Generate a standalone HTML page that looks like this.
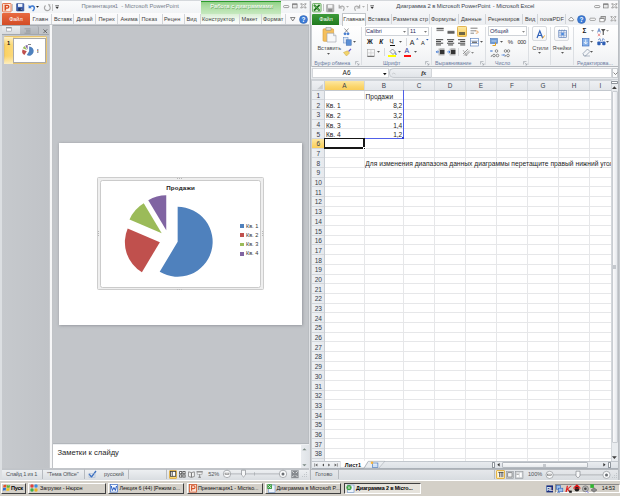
<!DOCTYPE html>
<html><head><meta charset="utf-8">
<style>
*{margin:0;padding:0;box-sizing:border-box}
html,body{width:620px;height:496px;overflow:hidden;background:#d4d0c8;font-family:"Liberation Sans",sans-serif;position:relative}
.a{position:absolute}
.t{position:absolute;white-space:nowrap;line-height:1;}
svg{position:absolute;overflow:visible}
</style></head><body>
<div class="a" style="left:0px;top:0px;width:311px;height:480px;background:#c2c5c9"></div>
<div class="a" style="left:0px;top:0px;width:311px;height:13px;background:linear-gradient(#fafbfc,#f1f3f5)"></div>
<div class="a" style="left:0px;top:13px;width:311px;height:12px;background:linear-gradient(#fbfbfc,#f5f6f7)"></div>
<div class="a" style="left:0px;top:24px;width:311px;height:1px;background:#c9ccd0"></div>
<div class="a" style="left:0px;top:25px;width:311px;height:1px;background:#a9adb2"></div>
<div class="a" style="left:0px;top:0px;width:1.5px;height:480px;background:#dcdfe2"></div>
<svg style="left:2px;top:2.6px" width="10" height="10"><rect x="0.5" y="0.5" width="8.6" height="8.4" rx="0.6" fill="#fde9de" stroke="#e0683c" stroke-width="0.9"/><rect x="1.5" y="1.5" width="3" height="6.4" fill="#f6b89a" opacity=".6"/><path d="M3.3 7.4 L3.3 2.4 L5.3 2.4 Q6.8 2.4 6.8 3.8 Q6.8 5.2 5.3 5.2 L3.3 5.2" fill="none" stroke="#d6461c" stroke-width="1.3"/></svg>
<div class="a" style="left:12px;top:4px;width:0.6px;height:7px;background:#c2c2c2"></div>
<svg style="left:15.5px;top:3.3px" width="9" height="9"><rect x="0.5" y="0.5" width="7.4" height="7.6" rx="0.6" fill="#3d5fae" stroke="#2b4788" stroke-width="0.5"/><rect x="2" y="0.8" width="4.4" height="3.1" fill="#eef2fa"/><rect x="2.3" y="5.1" width="3.8" height="2.8" fill="#22345e"/><rect x="4.8" y="5.5" width="0.9" height="1.6" fill="#8aa0d0"/></svg>
<svg style="left:26.5px;top:3px" width="9" height="9"><path d="M1.6 1.8 L1.6 5.2 L4.8 5.2z" fill="#3a78d0"/><path d="M2.4 4.6 C3.8 2.2 7.6 2.4 7.3 5.3 C7.1 6.6 6.4 7.4 5.6 8" fill="none" stroke="#3a78d0" stroke-width="1.4"/></svg>
<svg style="left:35.6px;top:5.8px" width="4" height="3"><path d="M0 0 L3 0 L1.5 1.8z" fill="#222"/></svg>
<svg style="left:42.5px;top:3px" width="9" height="9"><path d="M6.3 2.6 A2.9 2.9 0 1 1 2.6 2.4" fill="none" stroke="#a8a8a8" stroke-width="1.2"/><path d="M5 0.8 L7.6 1.8 L6.2 4z" fill="#a8a8a8"/></svg>
<div class="a" style="left:52px;top:4px;width:0.6px;height:7px;background:#c2c2c2"></div>
<svg style="left:54.5px;top:5px" width="5" height="5"><path d="M0.3 0.6 L4 0.6" stroke="#333" stroke-width="0.6"/><path d="M0.4 1.8 L3.9 1.8 L2.15 3.9z" fill="#333"/></svg>
<div class="t" style="left:81.5px;top:4.0px;font-size:5.8px;color:#76808c;letter-spacing:-0.15px">Презентация1</div>
<div class="t" style="left:121.2px;top:4.0px;font-size:5.8px;color:#76808c;letter-spacing:-0.03px">- Microsoft PowerPoint</div>
<div class="a" style="left:201px;top:0px;width:80px;height:13.5px;background:linear-gradient(#2c9c2d 0,#2c9c2d 1.5px,#8fd085 1.9px,#a9dc9f 6px,#c4e8bd 13.5px)"></div>
<div class="a" style="left:201px;top:13.5px;width:80px;height:10.5px;background:linear-gradient(#d9efd4,#f3faf2 60%,#fdfefd)"></div>
<div class="t" style="left:210.3px;top:3.9px;font-size:5.8px;color:#fff;letter-spacing:0.02px;text-shadow:0.5px 0.5px 0 rgba(50,120,50,.6)">Работа с диаграммами</div>
<svg style="left:283.3px;top:2px" width="26" height="8"><rect x="0.6" y="3.6" width="5.2" height="2" rx="0.8" fill="#fff" stroke="#7d7d7d" stroke-width="0.75"/><rect x="9.5" y="2" width="4.6" height="3.9" fill="#fff" stroke="#7d7d7d" stroke-width="0.75"/><path d="M9.5 2.2 L14.1 2.2" stroke="#7d7d7d" stroke-width="1.2"/><path d="M9.5 4 L14.1 4" stroke="#9a9a9a" stroke-width="0.5"/><path d="M17.6 1.8 L19.3 1.8 L20.4 3 L21.5 1.8 L23.2 1.8 L21.5 3.85 L23.2 5.9 L21.5 5.9 L20.4 4.7 L19.3 5.9 L17.6 5.9 L19.3 3.85z" fill="#fff" stroke="#7d7d7d" stroke-width="0.7"/></svg>
<div class="a" style="left:2px;top:13px;width:28px;height:11.5px;background:linear-gradient(#e86a40,#d24b25);border-radius:1px 1px 0 0"></div>
<div class="t" style="left:9.2px;top:16.8px;font-size:5.6px;color:#fff;letter-spacing:-0.1px">Файл</div>
<div class="t" style="left:32.5px;top:17.1px;font-size:5.6px;color:#3a3a3a;letter-spacing:0.08px">Главн</div>
<div class="a" style="left:51px;top:14px;width:0.6px;height:10px;background:#d2d5d9"></div>
<div class="t" style="left:54px;top:17.1px;font-size:5.6px;color:#3a3a3a;letter-spacing:0.08px">Вставк</div>
<div class="a" style="left:73px;top:14px;width:0.6px;height:10px;background:#d2d5d9"></div>
<div class="t" style="left:76.5px;top:17.1px;font-size:5.6px;color:#3a3a3a;letter-spacing:0.08px">Дизай</div>
<div class="a" style="left:95px;top:14px;width:0.6px;height:10px;background:#d2d5d9"></div>
<div class="t" style="left:98.5px;top:17.1px;font-size:5.6px;color:#3a3a3a;letter-spacing:0.08px">Перех</div>
<div class="a" style="left:117px;top:14px;width:0.6px;height:10px;background:#d2d5d9"></div>
<div class="t" style="left:120.5px;top:17.1px;font-size:5.6px;color:#3a3a3a;letter-spacing:0.08px">Анима</div>
<div class="a" style="left:139px;top:14px;width:0.6px;height:10px;background:#d2d5d9"></div>
<div class="t" style="left:141.5px;top:17.1px;font-size:5.6px;color:#3a3a3a;letter-spacing:0.08px">Показ</div>
<div class="a" style="left:162px;top:14px;width:0.6px;height:10px;background:#d2d5d9"></div>
<div class="t" style="left:164px;top:17.1px;font-size:5.6px;color:#3a3a3a;letter-spacing:0.08px">Рецен</div>
<div class="a" style="left:184px;top:14px;width:0.6px;height:10px;background:#d2d5d9"></div>
<div class="t" style="left:186.5px;top:17.1px;font-size:5.6px;color:#3a3a3a;letter-spacing:0.08px">Вид</div>
<div class="a" style="left:200px;top:14px;width:0.6px;height:10px;background:#d2d5d9"></div>
<div class="t" style="left:202px;top:17.1px;font-size:5.6px;color:#3a3a3a;letter-spacing:0.08px">Конструктор</div>
<div class="a" style="left:239px;top:14px;width:0.6px;height:10px;background:#d2d5d9"></div>
<div class="t" style="left:241.5px;top:17.1px;font-size:5.6px;color:#3a3a3a;letter-spacing:0.08px">Макет</div>
<div class="a" style="left:260.5px;top:14px;width:0.6px;height:10px;background:#d2d5d9"></div>
<div class="t" style="left:263px;top:17.1px;font-size:5.6px;color:#3a3a3a;letter-spacing:0.08px">Формат</div>
<div class="a" style="left:285px;top:14px;width:0.6px;height:10px;background:#d2d5d9"></div>
<svg style="left:289.5px;top:16.5px" width="6" height="5"><path d="M0.5 0.5 L5 0.5 L2.75 4z" fill="none" stroke="#555" stroke-width="0.7"/></svg>
<svg style="left:298.5px;top:14.5px" width="10" height="10"><circle cx="4.5" cy="4.5" r="4" fill="#3c7bd6" stroke="#2c5fa8" stroke-width="0.5"/><text x="4.5" y="6.9" font-size="6.5" font-weight="bold" fill="#fff" text-anchor="middle" font-family="Liberation Sans">?</text></svg>
<div class="a" style="left:2px;top:25px;width:47.5px;height:443px;background:linear-gradient(90deg,#c6c9cd,#c0c3c7)"></div>
<div class="a" style="left:0px;top:25px;width:50px;height:1px;background:#a9adb2"></div>
<div class="a" style="left:2px;top:25.5px;width:18px;height:9px;background:linear-gradient(#eceef0,#d5d8dc)"></div>
<div class="a" style="left:20px;top:25.8px;width:19px;height:8.7px;background:linear-gradient(#c2c6cb,#b2b6bb);border-radius:0 2px 0 0;border-right:0.5px solid #a5a9ae"></div>
<div class="a" style="left:2px;top:34.4px;width:47.5px;height:0.8px;background:#a4a8ad"></div>
<svg style="left:5.5px;top:27px" width="7" height="5"><rect x="0.5" y="0.5" width="5" height="3.6" fill="#fff" stroke="#8a8e93" stroke-width="0.5"/><path d="M0.6 0.9 L5.4 0.9" stroke="#5a5e63" stroke-width="0.7"/></svg>
<svg style="left:24px;top:27.5px" width="8" height="6"><path d="M0.5 0.8 L6.5 0.8 M2 2.3 L6.5 2.3 M2 3.8 L6.5 3.8 M0.5 5.2 L6.5 5.2" stroke="#8e9297" stroke-width="0.7"/></svg>
<svg style="left:42.6px;top:28.6px" width="5" height="5"><path d="M0.4 0.4 L4.1 4.1 M4.1 0.4 L0.4 4.1" stroke="#3a3a3a" stroke-width="0.65"/></svg>
<div class="a" style="left:3.7px;top:36px;width:43.3px;height:28.2px;background:linear-gradient(90deg,#fbd261 0,#fcd97a 20%,#fdeab0 45%,#fdf3d2 100%);border:0.6px solid #e8c46f;border-radius:1.2px"></div>
<div class="a" style="left:4.3px;top:36.6px;width:9px;height:27px;background:linear-gradient(#fdf0c4,rgba(252,214,110,0) 30%,rgba(252,214,110,0) 70%,#fdeebf)"></div>
<div class="t" style="left:7.1px;top:40.7px;font-size:5.6px;color:#111;font-weight:bold">1</div>
<div class="a" style="left:13.4px;top:38.2px;width:32.2px;height:24.6px;background:#fff;border:0.5px solid #a9a9a9"></div>
<div class="a" style="left:48.6px;top:25px;width:4.6px;height:443px;background:linear-gradient(90deg,#a2a6ab,#e6e7e9 22%,#ffffff 45%,#f2f3f4 70%,#9da1a6)"></div>
<div class="a" style="left:53px;top:26px;width:255.5px;height:417px;background:#c2c5c9"></div>
<div class="a" style="left:308px;top:26px;width:1px;height:417px;background:#b9bdc1"></div>
<div class="a" style="left:58.7px;top:142.7px;width:243px;height:182px;background:#fff;box-shadow:0.3px 0.3px 3px 0.6px rgba(70,75,82,.45)"></div>
<div class="a" style="left:96.8px;top:177.1px;width:167.1px;height:113.4px;background:#efefef;border:0.7px solid #cdcdcd;border-radius:1.5px"></div>
<div class="a" style="left:99.6px;top:179.9px;width:161.5px;height:107.9px;background:#fff;border:0.7px solid #cbcbcb;border-radius:2.5px"></div>
<div class="a" style="left:176.5px;top:177.8px;width:6px;height:1px;background:repeating-linear-gradient(90deg,#b9b9b9 0 1px,transparent 1px 2px)"></div>
<div class="a" style="left:176.5px;top:288.8px;width:6px;height:1px;background:repeating-linear-gradient(90deg,#b9b9b9 0 1px,transparent 1px 2px)"></div>
<div class="a" style="left:97.5px;top:231px;width:1px;height:6px;background:repeating-linear-gradient(#b9b9b9 0 1px,transparent 1px 2px)"></div>
<div class="a" style="left:261.8px;top:231px;width:1px;height:6px;background:repeating-linear-gradient(#b9b9b9 0 1px,transparent 1px 2px)"></div>
<svg style="left:0;top:0" width="620" height="496"><path d="M177.66 241.77 L177.66 206.77 A35.0 35.0 0 1 1 159.71 271.82Z" fill="#4f81bd"/><path d="M159.86 242.17 L141.90 272.22 A35.0 35.0 0 0 1 127.67 228.42Z" fill="#c0504d"/><path d="M161.70 233.18 L129.51 219.43 A35.0 35.0 0 0 1 143.74 203.14Z" fill="#9bbb59"/><path d="M166.23 230.34 L148.27 200.29 A35.0 35.0 0 0 1 166.23 195.34Z" fill="#8064a2"/></svg>
<div class="t" style="left:166.2px;top:184.5px;font-size:6.2px;color:#1a1a1a;font-weight:bold;letter-spacing:0.2px">Продажи</div>
<div class="a" style="left:240.1px;top:224.1px;width:3.6px;height:3.6px;background:#4f81bd"></div>
<div class="t" style="left:245.9px;top:223.5px;font-size:5.6px;color:#333;">Кв. 1</div>
<div class="a" style="left:240.1px;top:233.4px;width:3.6px;height:3.6px;background:#c0504d"></div>
<div class="t" style="left:245.9px;top:232.8px;font-size:5.6px;color:#333;">Кв. 2</div>
<div class="a" style="left:240.1px;top:242.7px;width:3.6px;height:3.6px;background:#9bbb59"></div>
<div class="t" style="left:245.9px;top:242.1px;font-size:5.6px;color:#333;">Кв. 3</div>
<div class="a" style="left:240.1px;top:252.0px;width:3.6px;height:3.6px;background:#8064a2"></div>
<div class="t" style="left:245.9px;top:251.4px;font-size:5.6px;color:#333;">Кв. 4</div>
<svg style="left:0;top:0" width="620" height="496"><path d="M29.13 51.14 L29.13 46.57 A4.5695473251028815 4.5695473251028815 0 1 1 26.78 55.06Z" fill="#4f81bd"/><path d="M26.78 51.19 L24.44 55.12 A4.5695473251028815 4.5695473251028815 0 0 1 22.58 49.40Z" fill="#c0504d"/><path d="M27.02 50.01 L22.82 48.21 A4.5695473251028815 4.5695473251028815 0 0 1 24.68 46.09Z" fill="#9bbb59"/><path d="M27.62 49.64 L25.28 45.71 A4.5695473251028815 4.5695473251028815 0 0 1 27.62 45.07Z" fill="#8064a2"/></svg>
<div class="a" style="left:27.59053497942387px;top:43.928395061728395px;width:3.2px;height:0.6px;background:#888"></div>
<div class="a" style="left:37.37489711934157px;top:48.830041152263384px;width:0.6px;height:0.6px;background:#4f81bd;opacity:.75"></div>
<div class="a" style="left:38.125514403292186px;top:48.830041152263384px;width:1.2px;height:0.6px;background:#d0d0d0"></div>
<div class="a" style="left:37.37489711934157px;top:50.03497942386832px;width:0.6px;height:0.6px;background:#c0504d;opacity:.75"></div>
<div class="a" style="left:38.125514403292186px;top:50.03497942386832px;width:1.2px;height:0.6px;background:#d0d0d0"></div>
<div class="a" style="left:37.37489711934157px;top:51.23991769547326px;width:0.6px;height:0.6px;background:#9bbb59;opacity:.75"></div>
<div class="a" style="left:38.125514403292186px;top:51.23991769547326px;width:1.2px;height:0.6px;background:#d0d0d0"></div>
<div class="a" style="left:37.37489711934157px;top:52.4448559670782px;width:0.6px;height:0.6px;background:#8064a2;opacity:.75"></div>
<div class="a" style="left:38.125514403292186px;top:52.4448559670782px;width:1.2px;height:0.6px;background:#d0d0d0"></div>
<div class="a" style="left:53px;top:443px;width:256px;height:1px;background:#b2b6bb"></div>
<div class="a" style="left:53px;top:444px;width:256px;height:1px;background:#eef0f2"></div>
<div class="a" style="left:53px;top:445px;width:255.5px;height:23px;background:#fff"></div>
<div class="t" style="left:57.4px;top:448.7px;font-size:7.6px;color:#1e1e1e;">Заметки к слайду</div>
<div class="a" style="left:301px;top:444.5px;width:7.5px;height:23.5px;background:linear-gradient(90deg,#e9ecef,#dfe3e7)"></div>
<svg style="left:302.2px;top:447.8px" width="5" height="3"><path d="M0.3 2.3 L2.4 0.3 L4.5 2.3z" fill="#7d8a85"/></svg>
<svg style="left:302.2px;top:463.6px" width="5" height="3"><path d="M0.3 0.3 L2.4 2.3 L4.5 0.3z" fill="#7d8a85"/></svg>
<div class="a" style="left:2px;top:468.8px;width:309px;height:11.2px;background:linear-gradient(#eff1f3,#e4e7ea 50%,#d9dde1)"></div>
<div class="a" style="left:2px;top:468.6px;width:309px;height:0.8px;background:#c0c4c9"></div>
<div class="t" style="left:6.0px;top:471.6px;font-size:5.6px;color:#4e5358;letter-spacing:-0.18px">Слайд 1 из 1</div>
<div class="a" style="left:42.3px;top:469px;width:0.6px;height:10px;background:#b7bbc0"></div>
<div class="t" style="left:46.9px;top:471.6px;font-size:5.6px;color:#4e5358;letter-spacing:-0.12px">"Тема Office"</div>
<div class="a" style="left:83.7px;top:469px;width:0.6px;height:10px;background:#b7bbc0"></div>
<svg style="left:87.5px;top:469.5px" width="10" height="9"><path d="M1 4 L3.5 7 L8 1" fill="none" stroke="#3a6fc0" stroke-width="1.3"/><rect x="1" y="3.5" width="6" height="4" fill="none" stroke="#9bb2d4" stroke-width="0.5"/></svg>
<div class="t" style="left:104px;top:471.6px;font-size:5.6px;color:#4e5358;letter-spacing:-0.05px">русский</div>
<div class="a" style="left:128px;top:469px;width:0.6px;height:10px;background:#b7bbc0"></div>
<div class="a" style="left:166px;top:469px;width:0.6px;height:10px;background:#b7bbc0"></div>
<div class="a" style="left:168.8px;top:469.8px;width:8.2px;height:9px;background:linear-gradient(#fdeaa8,#fbd466);border:0.8px solid #e0b350;border-radius:1px"></div>
<svg style="left:170px;top:471.2px" width="7" height="6"><rect x="0.5" y="0.5" width="5.2" height="4.8" fill="#fff" stroke="#3a3a3a" stroke-width="0.8"/><path d="M2.3 0.5 L2.3 5.3" stroke="#3a3a3a" stroke-width="0.8"/><path d="M0.9 1.8 L1.9 1.8 M0.9 3.2 L1.9 3.2" stroke="#888" stroke-width="0.5"/></svg>
<svg style="left:178.5px;top:471.2px" width="7" height="7"><rect x="0.6" y="0.6" width="2.2" height="2.2" fill="#fff" stroke="#444" stroke-width="0.8"/><rect x="3.9" y="0.6" width="2.2" height="2.2" fill="#fff" stroke="#444" stroke-width="0.8"/><rect x="0.6" y="3.9" width="2.2" height="2.2" fill="#fff" stroke="#444" stroke-width="0.8"/><rect x="3.9" y="3.9" width="2.2" height="2.2" fill="#fff" stroke="#444" stroke-width="0.8"/></svg>
<svg style="left:187.5px;top:471px" width="8" height="7"><path d="M0.6 0.8 L3.3 1.6 L3.3 6.3 L0.6 5.5z M6.3 0.8 L3.6 1.6 L3.6 6.3 L6.3 5.5z" fill="#fff" stroke="#666" stroke-width="0.7"/></svg>
<svg style="left:196.3px;top:471px" width="8" height="7"><path d="M0.5 0.8 L6.8 0.8" stroke="#666" stroke-width="0.9"/><path d="M1.2 1.3 L6.1 1.3 L6.1 3.3 L1.2 3.3z" fill="#fff" stroke="#777" stroke-width="0.5"/><path d="M3.65 3.3 L3.65 6.3 M2.3 6.3 L5 6.3" stroke="#666" stroke-width="0.7"/></svg>
<div class="t" style="left:208.3px;top:471.6px;font-size:5.6px;color:#4e5358;letter-spacing:-0.1px">52%</div>
<svg style="left:222px;top:469.2px" width="66" height="10"><path d="M8 4.9 L58 4.9" stroke="#9ea2a6" stroke-width="0.7"/><path d="M32.5 3.2 L32.5 6.6" stroke="#9ea2a6" stroke-width="0.6"/><circle cx="5" cy="4.9" r="3.7" fill="#fafbfc" stroke="#8e9297" stroke-width="0.7"/><rect x="3" y="4.1" width="4" height="1.6" fill="#fff" stroke="#555" stroke-width="0.5"/><path d="M19.5 1.2 L23.5 1.2 L23.5 6 L21.5 7.9 L19.5 6z" fill="#f7f8f9" stroke="#7a7e83" stroke-width="0.6"/><circle cx="61" cy="4.9" r="3.7" fill="#fafbfc" stroke="#8e9297" stroke-width="0.7"/><circle cx="61" cy="4.9" r="1.5" fill="#6a6e73"/></svg>
<svg style="left:290.6px;top:469.6px" width="8" height="9"><rect x="0.4" y="0.4" width="7" height="7.6" fill="#85898e" stroke="#9a9ea3" stroke-width="0.5"/><path d="M1.3 1.4 L3 3.1 M6.5 1.4 L4.8 3.1 M1.3 7 L3 5.3 M6.5 7 L4.8 5.3" stroke="#fff" stroke-width="0.8"/></svg>
<svg style="left:302px;top:472px" width="6" height="6"><g fill="#c2c6ca"><rect x="4" y="0" width="1" height="1"/><rect x="2" y="2" width="1" height="1"/><rect x="4" y="2" width="1" height="1"/><rect x="0" y="4" width="1" height="1"/><rect x="2" y="4" width="1" height="1"/><rect x="4" y="4" width="1" height="1"/></g></svg>
<div class="a" style="left:309px;top:0px;width:1px;height:480px;background:#dfe1e4"></div>
<div class="a" style="left:310px;top:0px;width:1px;height:480px;background:#b3b7bc"></div>
<div class="a" style="left:311px;top:0px;width:309px;height:480px;background:#fff"></div>
<div class="a" style="left:311px;top:0px;width:309px;height:13px;background:linear-gradient(#fbfbfc,#f3f4f6)"></div>
<div class="a" style="left:311px;top:13px;width:309px;height:12px;background:linear-gradient(#f4f5f7,#eceef1)"></div>
<div class="a" style="left:311px;top:24.5px;width:309px;height:0.8px;background:#c5c9cd"></div>
<div class="a" style="left:311px;top:25px;width:309px;height:41px;background:linear-gradient(#ffffff,#f7f8f9 60%,#eef0f2)"></div>
<div class="a" style="left:311px;top:65.6px;width:309px;height:1px;background:#b3b7bc"></div>
<div class="a" style="left:311px;top:0px;width:1px;height:25px;background:#e9ebee"></div>
<div class="a" style="left:311px;top:25px;width:1px;height:455px;background:#c9cdd1"></div>
<div class="a" style="left:0px;top:0px;width:620px;height:1px;background:#d5d8dc"></div>
<svg style="left:312px;top:2.6px" width="10" height="10"><rect x="0.5" y="0.5" width="8.6" height="8.4" rx="0.8" fill="#d4ecce" stroke="#5aa552" stroke-width="0.8"/><path d="M2 1.8 L7.6 7.6 M7.6 1.8 L2 7.6" stroke="#1c6e1f" stroke-width="1.7"/><path d="M2.5 2.3 L7.1 7.1" stroke="#72d35e" stroke-width="0.7"/></svg>
<div class="a" style="left:323px;top:4px;width:0.6px;height:7px;background:#c2c2c2"></div>
<svg style="left:326px;top:3.5px" width="9" height="9"><rect x="0.5" y="0.5" width="7.4" height="7.4" rx="0.6" fill="#b4b4b4" stroke="#9a9a9a" stroke-width="0.5"/><rect x="2" y="0.8" width="4.4" height="3" fill="#f3f3f3"/><rect x="2.3" y="5" width="3.8" height="2.6" fill="#8c8c8c"/></svg>
<svg style="left:336.5px;top:3px" width="9" height="9"><path d="M2.2 1.8 L2.2 5 L5.2 5 M2.5 4.7 C4 2.3 7.4 2.8 7.2 5.4 L6.3 7.8" fill="none" stroke="#ababab" stroke-width="1.2"/></svg>
<svg style="left:346px;top:5.8px" width="4" height="3"><path d="M0 0 L3 0 L1.5 1.8z" fill="#b0b0b0"/></svg>
<svg style="left:352.5px;top:3px" width="9" height="9"><path d="M6.6 1.8 L6.6 5 L3.6 5 M6.3 4.7 C4.8 2.3 1.4 2.8 1.6 5.4 L2.5 7.8" fill="none" stroke="#ababab" stroke-width="1.2"/></svg>
<svg style="left:362px;top:5.8px" width="4" height="3"><path d="M0 0 L3 0 L1.5 1.8z" fill="#b0b0b0"/></svg>
<div class="a" style="left:367px;top:4px;width:0.6px;height:7px;background:#c2c2c2"></div>
<svg style="left:369.5px;top:5px" width="5" height="5"><path d="M0.3 0.6 L4 0.6" stroke="#333" stroke-width="0.6"/><path d="M0.4 1.8 L3.9 1.8 L2.15 3.9z" fill="#333"/></svg>
<div class="t" style="left:396.3px;top:4.0px;font-size:5.8px;color:#3c4550;letter-spacing:-0.06px">Диаграмма 2 в Microsoft PowerPoint</div>
<div class="t" style="left:492.8px;top:4.0px;font-size:5.8px;color:#3c4550;letter-spacing:-0.08px">- Microsoft Excel</div>
<svg style="left:593.6px;top:2px" width="26" height="8"><rect x="0.6" y="3.6" width="5.2" height="2" rx="0.8" fill="#fff" stroke="#7d7d7d" stroke-width="0.75"/><rect x="9.5" y="2" width="4.6" height="3.9" fill="#fff" stroke="#7d7d7d" stroke-width="0.75"/><path d="M9.5 2.2 L14.1 2.2" stroke="#7d7d7d" stroke-width="1.2"/><path d="M9.5 4 L14.1 4" stroke="#9a9a9a" stroke-width="0.5"/><path d="M17.6 1.8 L19.3 1.8 L20.4 3 L21.5 1.8 L23.2 1.8 L21.5 3.85 L23.2 5.9 L21.5 5.9 L20.4 4.7 L19.3 5.9 L17.6 5.9 L19.3 3.85z" fill="#fff" stroke="#7d7d7d" stroke-width="0.7"/></svg>
<div class="a" style="left:312px;top:13.5px;width:27px;height:11px;background:linear-gradient(#3d9b3a,#217a1e);border-radius:1px 1px 0 0"></div>
<div class="t" style="left:319.3px;top:16.8px;font-size:5.6px;color:#fff;letter-spacing:-0.1px">Файл</div>
<div class="a" style="left:341.5px;top:13.2px;width:24px;height:12.5px;background:linear-gradient(#fff,#fbfcfc);border:0.7px solid #c2c6ca;border-bottom:none;border-radius:1px 1px 0 0"></div>
<div class="t" style="left:343.2px;top:17.1px;font-size:5.6px;color:#3a3a3a;">Главная</div>
<div class="t" style="left:368px;top:17.1px;font-size:5.6px;color:#3a3a3a;letter-spacing:0.08px">Вставка</div>
<div class="a" style="left:390.5px;top:14px;width:0.6px;height:10px;background:#d2d5d9"></div>
<div class="t" style="left:393px;top:17.1px;font-size:5.6px;color:#3a3a3a;letter-spacing:0.08px">Разметка стр</div>
<div class="a" style="left:428.5px;top:14px;width:0.6px;height:10px;background:#d2d5d9"></div>
<div class="t" style="left:431px;top:17.1px;font-size:5.6px;color:#3a3a3a;letter-spacing:0.08px">Формулы</div>
<div class="a" style="left:458px;top:14px;width:0.6px;height:10px;background:#d2d5d9"></div>
<div class="t" style="left:461px;top:17.1px;font-size:5.6px;color:#3a3a3a;letter-spacing:0.08px">Данные</div>
<div class="a" style="left:485px;top:14px;width:0.6px;height:10px;background:#d2d5d9"></div>
<div class="t" style="left:488px;top:17.1px;font-size:5.6px;color:#3a3a3a;letter-spacing:0.08px">Рецензиров</div>
<div class="a" style="left:521.5px;top:14px;width:0.6px;height:10px;background:#d2d5d9"></div>
<div class="t" style="left:525px;top:17.1px;font-size:5.6px;color:#3a3a3a;letter-spacing:0.08px">Вид</div>
<div class="a" style="left:537px;top:14px;width:0.6px;height:10px;background:#d2d5d9"></div>
<div class="t" style="left:540px;top:17.1px;font-size:5.6px;color:#3a3a3a;letter-spacing:0.08px">novaPDF</div>
<div class="a" style="left:565px;top:14px;width:0.6px;height:10px;background:#d2d5d9"></div>
<svg style="left:567.5px;top:16px" width="7" height="6"><path d="M0.8 3.6 L3.2 1 L5.6 3.6 L5 4.8 L1.4 4.8z" fill="#fff" stroke="#666" stroke-width="0.7"/></svg>
<svg style="left:576.5px;top:14.5px" width="10" height="10"><circle cx="4.5" cy="4.5" r="4" fill="#3c7bd6" stroke="#2c5fa8" stroke-width="0.5"/><text x="4.5" y="6.9" font-size="6.5" font-weight="bold" fill="#fff" text-anchor="middle" font-family="Liberation Sans">?</text></svg>
<svg style="left:588.5px;top:15px" width="30" height="8"><rect x="0.8" y="3.2" width="5.6" height="2.2" rx="0.8" fill="#fff" stroke="#858585" stroke-width="0.75"/><rect x="12" y="1.6" width="4.4" height="3.6" fill="#fff" stroke="#858585" stroke-width="0.75"/><path d="M12 1.8 L16.4 1.8" stroke="#858585" stroke-width="1"/><rect x="10.8" y="3.2" width="4.4" height="3.6" fill="#fff" stroke="#858585" stroke-width="0.75"/><path d="M10.8 3.4 L15.2 3.4" stroke="#858585" stroke-width="1"/><path d="M21.8 1.6 L23.4 1.6 L24.4 2.7 L25.4 1.6 L27 1.6 L25.4 3.75 L27 5.9 L25.4 5.9 L24.4 4.8 L23.4 5.9 L21.8 5.9 L23.4 3.75z" fill="#fff" stroke="#858585" stroke-width="0.7"/></svg>
<svg style="left:322px;top:26.5px" width="16" height="16"><rect x="1" y="1.8" width="10.6" height="12.5" rx="1" fill="#f5c05d" stroke="#d49b34" stroke-width="0.6"/><rect x="4" y="0.6" width="5" height="2.6" fill="#dedede" stroke="#8a8a8a" stroke-width="0.5"/><path d="M5 6.2 L11.5 6.2 L14 8.7 L14 15 L5 15z" fill="#f7f8fa" stroke="#9aa0a8" stroke-width="0.6"/><path d="M11.5 6.2 L11.5 8.7 L14 8.7" fill="#dfe3e8" stroke="#9aa0a8" stroke-width="0.5"/></svg>
<div class="t" style="left:317.4px;top:45.6px;font-size:5.6px;color:#4a4a4a;">Вставить</div>
<svg style="left:327.3px;top:52.800000000000004px" width="4" height="3"><path d="M0 0 L3 0 L1.5 1.8z" fill="#555"/></svg>
<svg style="left:343px;top:27.5px" width="8" height="8"><path d="M1.5 0.5 L5 4.5 M5.5 0.5 L2 4.5" stroke="#555" stroke-width="0.6"/><circle cx="2" cy="5.8" r="1.4" fill="#4a7fd0"/><circle cx="5" cy="5.8" r="1.4" fill="#4a7fd0"/></svg>
<svg style="left:342.5px;top:36.5px" width="10" height="9"><rect x="0.5" y="0.5" width="4.5" height="5.5" fill="#dfe8f5" stroke="#5a85c5" stroke-width="0.5"/><rect x="3.2" y="2.8" width="5" height="5.5" fill="#5b8fd5" stroke="#3a65a5" stroke-width="0.5"/></svg>
<svg style="left:352.8px;top:40.800000000000004px" width="4" height="3"><path d="M0 0 L3 0 L1.5 1.8z" fill="#555"/></svg>
<svg style="left:342.5px;top:48px" width="9" height="9"><path d="M5.5 3.5 L8 0.8" stroke="#6a5acd" stroke-width="1.2"/><path d="M0.5 4.5 L4.5 2.8 L6.5 5 L3.5 8z" fill="#f2d36b" stroke="#c9a640" stroke-width="0.5"/></svg>
<div class="t" style="left:314.2px;top:60.6px;font-size:5.3px;color:#6a7aa0;">Буфер обмена</div>
<svg style="left:355.3px;top:60.5px" width="5" height="5"><path d="M0.5 0.5 L3.5 0.5 M0.5 0.5 L0.5 3.5 M1.5 1.5 L4 4 M2.3 4 L4 4 L4 2.3" fill="none" stroke="#8a9098" stroke-width="0.5"/></svg>
<div class="a" style="left:361px;top:27px;width:1px;height:38px;background:#dcdfe3"></div>
<div class="a" style="left:364.6px;top:26.9px;width:43.6px;height:9.3px;background:#fff;border:0.6px solid #cfd3d8"></div>
<div class="a" style="left:408.2px;top:26.9px;width:21.3px;height:9.3px;background:#fff;border:0.6px solid #cfd3d8"></div>
<div class="t" style="left:366px;top:29.4px;font-size:5.6px;color:#2a2a5a;">Calibri</div>
<div class="t" style="left:410px;top:29.4px;font-size:5.6px;color:#2a2a5a;">11</div>
<svg style="left:402.7px;top:30.5px" width="4" height="3"><path d="M0 0 L3 0 L1.5 1.8z" fill="#777"/></svg>
<svg style="left:423.7px;top:30.5px" width="4" height="3"><path d="M0 0 L3 0 L1.5 1.8z" fill="#777"/></svg>
<div class="t" style="left:367px;top:39.4px;font-size:6.3px;color:#111;font-weight:bold">Ж</div>
<div class="t" style="left:379.3px;top:39.4px;font-size:6.3px;color:#111;font-weight:bold;font-style:italic">К</div>
<div class="t" style="left:389.6px;top:39.4px;font-size:6.3px;color:#111;">Ч</div>
<div class="a" style="left:389.6px;top:44.9px;width:5.8px;height:0.6px;background:#111"></div>
<svg style="left:399.0px;top:41.2px" width="4" height="3"><path d="M0 0 L3 0 L1.5 1.8z" fill="#555"/></svg>
<div class="a" style="left:405.8px;top:38px;width:0.6px;height:8px;background:#d5d8dc"></div>
<div class="t" style="left:409.8px;top:39.3px;font-size:7px;color:#222;">A</div>
<svg style="left:415.5px;top:38px" width="3" height="2"><path d="M0 1.6 L1.3 0 L2.6 1.6z" fill="#2a5ab0"/></svg>
<div class="t" style="left:421px;top:40.5px;font-size:5.6px;color:#222;">A</div>
<svg style="left:425.5px;top:39px" width="3" height="2"><path d="M0 0 L1.3 1.6 L2.6 0z" fill="#2a5ab0"/></svg>
<svg style="left:366.5px;top:48.5px" width="8" height="8"><rect x="0.5" y="0.5" width="6.8" height="6.8" fill="none" stroke="#9a9a9a" stroke-width="0.5"/><path d="M3.9 0.5 L3.9 7.3 M0.5 3.9 L7.3 3.9" stroke="#c0c0c0" stroke-width="0.5"/><path d="M0.5 7.3 L7.3 7.3" stroke="#333" stroke-width="0.7"/></svg>
<svg style="left:377.0px;top:51.2px" width="4" height="3"><path d="M0 0 L3 0 L1.5 1.8z" fill="#555"/></svg>
<div class="a" style="left:383.5px;top:48px;width:0.6px;height:8px;background:#d5d8dc"></div>
<svg style="left:387.5px;top:47.5px" width="10" height="10"><path d="M2 3.5 L4.5 1 L7.5 4 L5 6.5z" fill="#f4f6f8" stroke="#555" stroke-width="0.6"/><path d="M7 4.5 Q8.5 6 8 7" stroke="#3a6ec0" stroke-width="1" fill="none"/><rect x="0" y="7" width="8" height="2" fill="#ffff00"/></svg>
<svg style="left:398.1px;top:51.2px" width="4" height="3"><path d="M0 0 L3 0 L1.5 1.8z" fill="#555"/></svg>
<div class="t" style="left:404.5px;top:47.4px;font-size:7px;color:#2a3a9a;">A</div>
<div class="a" style="left:403.5px;top:54.6px;width:7.6px;height:2px;background:#ff1010"></div>
<svg style="left:414.1px;top:51.2px" width="4" height="3"><path d="M0 0 L3 0 L1.5 1.8z" fill="#555"/></svg>
<div class="t" style="left:383px;top:60.6px;font-size:5.3px;color:#6a7aa0;">Шрифт</div>
<svg style="left:424.5px;top:60.5px" width="5" height="5"><path d="M0.5 0.5 L3.5 0.5 M0.5 0.5 L0.5 3.5 M1.5 1.5 L4 4 M2.3 4 L4 4 L4 2.3" fill="none" stroke="#8a9098" stroke-width="0.5"/></svg>
<div class="a" style="left:431px;top:27px;width:1px;height:38px;background:#dcdfe3"></div>
<svg style="left:435.5px;top:27px" width="9" height="6"><rect x="0.5" y="0.8" width="7.2" height="1.3" fill="#5a5a5a"/><rect x="0.5" y="2.6" width="7.2" height="1.5" fill="#8a8a8a"/></svg>
<svg style="left:447px;top:29.5px" width="9" height="5"><rect x="0.5" y="0.8" width="7" height="1.4" fill="#6a6a6a"/><rect x="0.5" y="2.2" width="7" height="1.4" fill="#3f3f3f"/></svg>
<div class="a" style="left:456.6px;top:25.9px;width:10.2px;height:10.7px;background:linear-gradient(#fde9a6,#fbd66e 60%,#f9cd58);border:0.6px solid #e2b450;border-radius:1.2px"></div>
<div class="a" style="left:458.6px;top:31.8px;width:6.4px;height:2.8px;background:#6e6645"></div>
<svg style="left:469.5px;top:26.5px" width="10" height="8"><path d="M0.5 1.2 L7.5 1.2" stroke="#8a8a8a" stroke-width="1.1"/><path d="M0.5 3.8 L6 3.8 M0.5 6.2 L4 6.2" stroke="#8a8a8a" stroke-width="1"/><path d="M5.5 3.8 Q8.3 3.8 8.3 5.1 Q8.3 6.3 5.8 6.3" fill="none" stroke="#e08a30" stroke-width="0.7"/></svg>
<svg style="left:436px;top:38.6px" width="8" height="7"><path d="M0.0 0.70 L7.2 0.70 M0.0 2.45 L5.0 2.45 M0.0 4.20 L7.2 4.20 M0.0 5.95 L5.0 5.95 " stroke="#404040" stroke-width="1.0"/></svg>
<svg style="left:447px;top:38.6px" width="8" height="7"><path d="M0.0 0.70 L7.2 0.70 M1.1 2.45 L6.1 2.45 M0.0 4.20 L7.2 4.20 M1.1 5.95 L6.1 5.95 " stroke="#404040" stroke-width="1.0"/></svg>
<svg style="left:458px;top:38.6px" width="8" height="7"><path d="M0.0 0.70 L7.2 0.70 M2.2 2.45 L7.2 2.45 M0.0 4.20 L7.2 4.20 M2.2 5.95 L7.2 5.95 " stroke="#404040" stroke-width="1.0"/></svg>
<svg style="left:469.5px;top:37.5px" width="10" height="9"><rect x="0.5" y="0.5" width="8" height="7.5" fill="#fff" stroke="#4a74b8" stroke-width="0.6"/><path d="M0.5 3 L8.5 3 M0.5 5.5 L8.5 5.5" stroke="#4a74b8" stroke-width="0.5"/><path d="M2 4.2 L7 4.2" stroke="#222" stroke-width="0.9"/></svg>
<svg style="left:479.7px;top:41.0px" width="4" height="3"><path d="M0 0 L3 0 L1.5 1.8z" fill="#555"/></svg>
<svg style="left:435.5px;top:48px" width="9" height="8"><path d="M3.2 0.5 L3.2 7.5" stroke="#666" stroke-width="0.6"/><rect x="4" y="1.8" width="4.5" height="4.2" fill="#333"/><path d="M8.5 1 L4 1 M8.5 6.8 L4 6.8" stroke="#777" stroke-width="0.8"/><path d="M3 3.9 L0.3 3.9 M1.6 2.6 L0.3 3.9 L1.6 5.2" fill="none" stroke="#2a6ad0" stroke-width="0.8"/></svg>
<svg style="left:446.5px;top:48px" width="9" height="8"><path d="M3.2 0.5 L3.2 7.5" stroke="#666" stroke-width="0.6"/><rect x="4" y="1.8" width="4.5" height="4.2" fill="#333"/><path d="M8.5 1 L4 1 M8.5 6.8 L4 6.8" stroke="#777" stroke-width="0.8"/><path d="M0.3 3.9 L3 3.9 M1.7 2.6 L3 3.9 L1.7 5.2" fill="none" stroke="#2a6ad0" stroke-width="0.8"/></svg>
<div class="a" style="left:457.5px;top:48px;width:0.6px;height:8px;background:#d5d8dc"></div>
<svg style="left:461.5px;top:47.5px" width="12" height="9"><path d="M1 6 L6 1 M2 7.5 L7 2.5 M3.5 8 L8 3.5" stroke="#555" stroke-width="0.6"/><path d="M1 2 L5 8" stroke="#777" stroke-width="0.5"/></svg>
<svg style="left:470.7px;top:51.5px" width="4" height="3"><path d="M0 0 L3 0 L1.5 1.8z" fill="#888"/></svg>
<div class="t" style="left:435px;top:60.6px;font-size:5.3px;color:#6a7aa0;">Выравнивание</div>
<svg style="left:479.7px;top:60.5px" width="5" height="5"><path d="M0.5 0.5 L3.5 0.5 M0.5 0.5 L0.5 3.5 M1.5 1.5 L4 4 M2.3 4 L4 4 L4 2.3" fill="none" stroke="#8a9098" stroke-width="0.5"/></svg>
<div class="a" style="left:485px;top:27px;width:1px;height:38px;background:#dcdfe3"></div>
<div class="a" style="left:488.4px;top:26.2px;width:38.6px;height:9.8px;background:#fff;border:0.6px solid #cfd3d8"></div>
<div class="t" style="left:490px;top:29.4px;font-size:5.6px;color:#2a2a5a;">Общий</div>
<svg style="left:522.0px;top:30.7px" width="4" height="3"><path d="M0 0 L3 0 L1.5 1.8z" fill="#888"/></svg>
<svg style="left:489.5px;top:37.5px" width="9" height="9"><rect x="0.5" y="0.5" width="7" height="5" fill="#6a9ad8" stroke="#3a68b0" stroke-width="0.5"/><path d="M1.5 3 L6.5 3" stroke="#fff" stroke-width="0.6"/><path d="M5.5 4.5 L5.5 7.5 L2.5 7.5" fill="none" stroke="#e0a020" stroke-width="1"/></svg>
<svg style="left:500.1px;top:41.400000000000006px" width="4" height="3"><path d="M0 0 L3 0 L1.5 1.8z" fill="#555"/></svg>
<div class="t" style="left:507.8px;top:39.1px;font-size:6px;color:#333;">%</div>
<div class="t" style="left:517.5px;top:39.5px;font-size:5.6px;color:#333;letter-spacing:-0.3px">000</div>
<svg style="left:490px;top:48.5px" width="10" height="9"><path d="M0.5 2 L3 2 M1.5 1 L0.5 2 L1.5 3" fill="none" stroke="#2a6ad0" stroke-width="0.6"/><circle cx="6.5" cy="2" r="1.3" fill="none" stroke="#333" stroke-width="0.5"/><circle cx="4" cy="6.5" r="1.3" fill="none" stroke="#333" stroke-width="0.5"/><circle cx="7.5" cy="6.5" r="1.3" fill="none" stroke="#333" stroke-width="0.5"/><path d="M1 8 L2 6" stroke="#333" stroke-width="0.5"/></svg>
<svg style="left:501px;top:48.5px" width="10" height="9"><circle cx="4.5" cy="2" r="1.3" fill="none" stroke="#333" stroke-width="0.5"/><circle cx="7.5" cy="2" r="1.3" fill="none" stroke="#333" stroke-width="0.5"/><path d="M0.5 6 L3.5 6 M2.5 5 L3.5 6 L2.5 7" fill="none" stroke="#2a6ad0" stroke-width="0.6"/><circle cx="7" cy="6.5" r="1.3" fill="none" stroke="#333" stroke-width="0.5"/><path d="M3.8 8 L4.8 6" stroke="#333" stroke-width="0.5"/></svg>
<div class="t" style="left:495px;top:60.6px;font-size:5.3px;color:#6a7aa0;">Число</div>
<svg style="left:523px;top:60.5px" width="5" height="5"><path d="M0.5 0.5 L3.5 0.5 M0.5 0.5 L0.5 3.5 M1.5 1.5 L4 4 M2.3 4 L4 4 L4 2.3" fill="none" stroke="#8a9098" stroke-width="0.5"/></svg>
<div class="a" style="left:528px;top:27px;width:1px;height:38px;background:#dcdfe3"></div>
<div class="a" style="left:532.2px;top:26.2px;width:15.1px;height:15.1px;background:linear-gradient(#ffffff,#f4f5f7);border:0.6px solid #d8dbdf;border-radius:2px"></div>
<svg style="left:536px;top:29.5px" width="10" height="10"><path d="M1 8 L3.8 0.8 L6.6 8 M2.2 5.5 L5.4 5.5" fill="none" stroke="#2d5fb8" stroke-width="1.2"/><path d="M6.5 8.5 L8.5 5.5" stroke="#f0a020" stroke-width="1"/></svg>
<div class="t" style="left:532.2px;top:45.6px;font-size:5.6px;color:#4a4a4a;">Стили</div>
<svg style="left:538.3px;top:52.0px" width="4" height="3"><path d="M0 0 L3 0 L1.5 1.8z" fill="#555"/></svg>
<div class="a" style="left:550px;top:27px;width:1px;height:38px;background:#dcdfe3"></div>
<div class="a" style="left:554.2px;top:26.2px;width:15.2px;height:15.1px;background:linear-gradient(#ffffff,#f4f5f7);border:0.6px solid #d8dbdf;border-radius:2px"></div>
<svg style="left:557.5px;top:29px" width="10" height="10"><rect x="0.8" y="1.5" width="7.5" height="7" fill="#e3ebf7" stroke="#4a70b0" stroke-width="0.6"/><path d="M0.8 3.8 L8.3 3.8 M0.8 6.2 L8.3 6.2 M3.3 1.5 L3.3 8.5 M5.8 1.5 L5.8 8.5" stroke="#4a70b0" stroke-width="0.4"/><rect x="3.3" y="3.8" width="2.5" height="2.4" fill="#4a8ae0"/><path d="M1.5 0.5 L1.5 1.5 M4 0.5 L4 1.5 M6.5 0.5 L6.5 1.5" stroke="#4a70b0" stroke-width="0.5"/></svg>
<div class="t" style="left:552.5px;top:45.6px;font-size:5.6px;color:#4a4a4a;">Ячейки</div>
<svg style="left:560.5px;top:52.0px" width="4" height="3"><path d="M0 0 L3 0 L1.5 1.8z" fill="#555"/></svg>
<div class="a" style="left:573px;top:27px;width:1px;height:38px;background:#dcdfe3"></div>
<div class="t" style="left:582.6px;top:28.2px;font-size:6.5px;color:#111;font-weight:bold">Σ</div>
<svg style="left:591.0px;top:30.0px" width="4" height="3"><path d="M0 0 L3 0 L1.5 1.8z" fill="#999"/></svg>
<svg style="left:596.5px;top:27.5px" width="10" height="9"><path d="M0.5 4.5 L2 0.5 L3.5 4.5 M1 3 L3 3" fill="none" stroke="#2a5ab0" stroke-width="0.6"/><path d="M0.8 5.5 L3.2 8.2 M3.2 5.5 L0.8 8.2" stroke="#e03030" stroke-width="0.5"/><path d="M4 1 L8.5 1 L6.8 3.5 L6.8 7 L5.7 7 L5.7 3.5z" fill="#555"/></svg>
<svg style="left:605.7px;top:30.0px" width="4" height="3"><path d="M0 0 L3 0 L1.5 1.8z" fill="#999"/></svg>
<svg style="left:581.5px;top:37.5px" width="8" height="9"><rect x="0.5" y="0.5" width="6.5" height="7.5" fill="#8ab4ea" stroke="#2f62b8" stroke-width="0.6"/><path d="M3.7 1.5 L3.7 5.5 M2 4 L3.7 6 L5.4 4" fill="none" stroke="#fff" stroke-width="0.8"/></svg>
<svg style="left:590.1px;top:41.0px" width="4" height="3"><path d="M0 0 L3 0 L1.5 1.8z" fill="#555"/></svg>
<svg style="left:596.5px;top:37.5px" width="9" height="8"><path d="M1 2 L3 0.5 L3.8 3.5 M7.8 2 L5.8 0.5 L5 3.5" fill="none" stroke="#2a5ab0" stroke-width="0.6"/><rect x="0.3" y="3.5" width="3.3" height="3.8" rx="1" fill="#2e5fb5"/><rect x="5.2" y="3.5" width="3.3" height="3.8" rx="1" fill="#2e5fb5"/><path d="M3.6 4.5 L5.2 4.5" stroke="#2e5fb5" stroke-width="1"/></svg>
<svg style="left:605.7px;top:41.0px" width="4" height="3"><path d="M0 0 L3 0 L1.5 1.8z" fill="#555"/></svg>
<svg style="left:581.5px;top:48px" width="9" height="8"><path d="M1 5.5 L5.5 1 L8 3.5 L3.5 8 L2 8z" fill="#f3f5f8" stroke="#6a7a90" stroke-width="0.6"/><path d="M3 8 L8 8" stroke="#6a7a90" stroke-width="0.5"/></svg>
<svg style="left:590.1px;top:51.0px" width="4" height="3"><path d="M0 0 L3 0 L1.5 1.8z" fill="#555"/></svg>
<div class="t" style="left:577px;top:60.6px;font-size:5.3px;color:#6a7aa0;">Редактирова...</div>
<div class="a" style="left:311px;top:66.6px;width:307px;height:13.4px;background:#e6e9ec"></div>
<div class="a" style="left:311px;top:66.6px;width:307px;height:1px;background:#f4f5f7"></div>
<div class="a" style="left:312px;top:68.4px;width:76.5px;height:9.6px;background:#fff;border:0.5px solid #d3d6da"></div>
<div class="t" style="left:342.6px;top:70.4px;font-size:6.6px;color:#1e1e1e;">A6</div>
<svg style="left:383px;top:72.6px" width="5" height="4"><path d="M0 0 L3.6 0 L1.8 2.3z" fill="#111"/></svg>
<div class="a" style="left:389.2px;top:68.4px;width:42px;height:9.6px;background:linear-gradient(#eef0f3,#e2e5e9);border:0.6px solid #c6cacf;border-right:none;border-radius:4.8px 0 0 4.8px"></div>
<svg style="left:390.5px;top:70.5px" width="6" height="5"><path d="M1 3.2 Q2.8 0.8 4.6 3.2" fill="none" stroke="#b8bcc0" stroke-width="0.6"/></svg>
<div class="t" style="left:421.2px;top:70.3px;font-size:6.4px;color:#222;font-family:'Liberation Serif';font-weight:bold;letter-spacing:-0.3px"><i>fx</i></div>
<div class="a" style="left:431px;top:68.4px;width:180.5px;height:9.6px;background:#fff;border:0.5px solid #d3d6da"></div>
<div class="a" style="left:611.5px;top:68.4px;width:6.5px;height:9.6px;background:#fafbfc;border:0.5px solid #c8ccd0"></div>
<svg style="left:612.5px;top:71.8px" width="5" height="4"><path d="M0.5 0.5 L2.5 2.5 L4.5 0.5" fill="none" stroke="#555" stroke-width="0.7"/></svg>
<div class="a" style="left:311px;top:78.6px;width:307px;height:1.4px;background:#cdd1d6"></div>
<div class="a" style="left:312px;top:81px;width:299px;height:9px;background:linear-gradient(#eef0f3,#e3e6ea)"></div>
<div class="a" style="left:325px;top:81px;width:39px;height:9px;background:linear-gradient(#fde7a0,#fbd66d 60%,#f9cd58)"></div>
<div class="a" style="left:312px;top:90px;width:299px;height:1px;background:#c3c8ce"></div>
<div class="a" style="left:312px;top:80px;width:299px;height:1px;background:#d0d4d9"></div>
<div class="a" style="left:364px;top:81px;width:1px;height:9px;background:#d3d7dc"></div>
<div class="a" style="left:403px;top:81px;width:1px;height:9px;background:#d3d7dc"></div>
<div class="a" style="left:434px;top:81px;width:1px;height:9px;background:#d3d7dc"></div>
<div class="a" style="left:465px;top:81px;width:1px;height:9px;background:#d3d7dc"></div>
<div class="a" style="left:496px;top:81px;width:1px;height:9px;background:#d3d7dc"></div>
<div class="a" style="left:527px;top:81px;width:1px;height:9px;background:#d3d7dc"></div>
<div class="a" style="left:558px;top:81px;width:1px;height:9px;background:#d3d7dc"></div>
<div class="a" style="left:589px;top:81px;width:1px;height:9px;background:#d3d7dc"></div>
<div class="t" style="left:325px;top:82.75px;width:39px;text-align:center;font-size:6.4px;color:#38414c">A</div>
<div class="t" style="left:365px;top:82.75px;width:38px;text-align:center;font-size:6.4px;color:#38414c">B</div>
<div class="t" style="left:404px;top:82.75px;width:30px;text-align:center;font-size:6.4px;color:#38414c">C</div>
<div class="t" style="left:435px;top:82.75px;width:30px;text-align:center;font-size:6.4px;color:#38414c">D</div>
<div class="t" style="left:466px;top:82.75px;width:30px;text-align:center;font-size:6.4px;color:#38414c">E</div>
<div class="t" style="left:497px;top:82.75px;width:30px;text-align:center;font-size:6.4px;color:#38414c">F</div>
<div class="t" style="left:528px;top:82.75px;width:30px;text-align:center;font-size:6.4px;color:#38414c">G</div>
<div class="t" style="left:559px;top:82.75px;width:30px;text-align:center;font-size:6.4px;color:#38414c">H</div>
<div class="t" style="left:590px;top:82.75px;width:21px;text-align:center;font-size:6.4px;color:#38414c">I</div>
<svg style="left:316.6px;top:83.5px" width="7" height="7"><path d="M5.8 0 L5.8 5.3 L0 5.3z" fill="#c8ccd1"/></svg>
<div class="a" style="left:312px;top:91px;width:12px;height:370px;background:linear-gradient(90deg,#eef1f4,#e6e9ed)"></div>
<div class="a" style="left:324px;top:81px;width:1px;height:380px;background:#c9ced4"></div>
<div class="a" style="left:312px;top:139px;width:12px;height:10px;background:linear-gradient(#fde7a0,#fbd66d 60%,#f9cd58)"></div>
<div class="a" style="left:312px;top:99px;width:12px;height:1px;background:#d3d7dc"></div>
<div class="a" style="left:325px;top:99px;width:286px;height:1px;background:#e6e7e9"></div>
<div class="a" style="left:312px;top:109px;width:12px;height:1px;background:#d3d7dc"></div>
<div class="a" style="left:325px;top:109px;width:286px;height:1px;background:#e6e7e9"></div>
<div class="a" style="left:312px;top:119px;width:12px;height:1px;background:#d3d7dc"></div>
<div class="a" style="left:325px;top:119px;width:286px;height:1px;background:#e6e7e9"></div>
<div class="a" style="left:312px;top:128px;width:12px;height:1px;background:#d3d7dc"></div>
<div class="a" style="left:325px;top:128px;width:286px;height:1px;background:#e6e7e9"></div>
<div class="a" style="left:312px;top:138px;width:12px;height:1px;background:#d3d7dc"></div>
<div class="a" style="left:325px;top:138px;width:286px;height:1px;background:#e6e7e9"></div>
<div class="a" style="left:312px;top:148px;width:12px;height:1px;background:#d3d7dc"></div>
<div class="a" style="left:325px;top:148px;width:286px;height:1px;background:#e6e7e9"></div>
<div class="a" style="left:312px;top:157px;width:12px;height:1px;background:#d3d7dc"></div>
<div class="a" style="left:325px;top:157px;width:286px;height:1px;background:#e6e7e9"></div>
<div class="a" style="left:312px;top:167px;width:12px;height:1px;background:#d3d7dc"></div>
<div class="a" style="left:325px;top:167px;width:286px;height:1px;background:#e6e7e9"></div>
<div class="a" style="left:312px;top:177px;width:12px;height:1px;background:#d3d7dc"></div>
<div class="a" style="left:325px;top:177px;width:286px;height:1px;background:#e6e7e9"></div>
<div class="a" style="left:312px;top:186px;width:12px;height:1px;background:#d3d7dc"></div>
<div class="a" style="left:325px;top:186px;width:286px;height:1px;background:#e6e7e9"></div>
<div class="a" style="left:312px;top:196px;width:12px;height:1px;background:#d3d7dc"></div>
<div class="a" style="left:325px;top:196px;width:286px;height:1px;background:#e6e7e9"></div>
<div class="a" style="left:312px;top:206px;width:12px;height:1px;background:#d3d7dc"></div>
<div class="a" style="left:325px;top:206px;width:286px;height:1px;background:#e6e7e9"></div>
<div class="a" style="left:312px;top:215px;width:12px;height:1px;background:#d3d7dc"></div>
<div class="a" style="left:325px;top:215px;width:286px;height:1px;background:#e6e7e9"></div>
<div class="a" style="left:312px;top:225px;width:12px;height:1px;background:#d3d7dc"></div>
<div class="a" style="left:325px;top:225px;width:286px;height:1px;background:#e6e7e9"></div>
<div class="a" style="left:312px;top:235px;width:12px;height:1px;background:#d3d7dc"></div>
<div class="a" style="left:325px;top:235px;width:286px;height:1px;background:#e6e7e9"></div>
<div class="a" style="left:312px;top:244px;width:12px;height:1px;background:#d3d7dc"></div>
<div class="a" style="left:325px;top:244px;width:286px;height:1px;background:#e6e7e9"></div>
<div class="a" style="left:312px;top:254px;width:12px;height:1px;background:#d3d7dc"></div>
<div class="a" style="left:325px;top:254px;width:286px;height:1px;background:#e6e7e9"></div>
<div class="a" style="left:312px;top:264px;width:12px;height:1px;background:#d3d7dc"></div>
<div class="a" style="left:325px;top:264px;width:286px;height:1px;background:#e6e7e9"></div>
<div class="a" style="left:312px;top:274px;width:12px;height:1px;background:#d3d7dc"></div>
<div class="a" style="left:325px;top:274px;width:286px;height:1px;background:#e6e7e9"></div>
<div class="a" style="left:312px;top:283px;width:12px;height:1px;background:#d3d7dc"></div>
<div class="a" style="left:325px;top:283px;width:286px;height:1px;background:#e6e7e9"></div>
<div class="a" style="left:312px;top:293px;width:12px;height:1px;background:#d3d7dc"></div>
<div class="a" style="left:325px;top:293px;width:286px;height:1px;background:#e6e7e9"></div>
<div class="a" style="left:312px;top:303px;width:12px;height:1px;background:#d3d7dc"></div>
<div class="a" style="left:325px;top:303px;width:286px;height:1px;background:#e6e7e9"></div>
<div class="a" style="left:312px;top:312px;width:12px;height:1px;background:#d3d7dc"></div>
<div class="a" style="left:325px;top:312px;width:286px;height:1px;background:#e6e7e9"></div>
<div class="a" style="left:312px;top:322px;width:12px;height:1px;background:#d3d7dc"></div>
<div class="a" style="left:325px;top:322px;width:286px;height:1px;background:#e6e7e9"></div>
<div class="a" style="left:312px;top:332px;width:12px;height:1px;background:#d3d7dc"></div>
<div class="a" style="left:325px;top:332px;width:286px;height:1px;background:#e6e7e9"></div>
<div class="a" style="left:312px;top:341px;width:12px;height:1px;background:#d3d7dc"></div>
<div class="a" style="left:325px;top:341px;width:286px;height:1px;background:#e6e7e9"></div>
<div class="a" style="left:312px;top:351px;width:12px;height:1px;background:#d3d7dc"></div>
<div class="a" style="left:325px;top:351px;width:286px;height:1px;background:#e6e7e9"></div>
<div class="a" style="left:312px;top:361px;width:12px;height:1px;background:#d3d7dc"></div>
<div class="a" style="left:325px;top:361px;width:286px;height:1px;background:#e6e7e9"></div>
<div class="a" style="left:312px;top:370px;width:12px;height:1px;background:#d3d7dc"></div>
<div class="a" style="left:325px;top:370px;width:286px;height:1px;background:#e6e7e9"></div>
<div class="a" style="left:312px;top:380px;width:12px;height:1px;background:#d3d7dc"></div>
<div class="a" style="left:325px;top:380px;width:286px;height:1px;background:#e6e7e9"></div>
<div class="a" style="left:312px;top:390px;width:12px;height:1px;background:#d3d7dc"></div>
<div class="a" style="left:325px;top:390px;width:286px;height:1px;background:#e6e7e9"></div>
<div class="a" style="left:312px;top:399px;width:12px;height:1px;background:#d3d7dc"></div>
<div class="a" style="left:325px;top:399px;width:286px;height:1px;background:#e6e7e9"></div>
<div class="a" style="left:312px;top:409px;width:12px;height:1px;background:#d3d7dc"></div>
<div class="a" style="left:325px;top:409px;width:286px;height:1px;background:#e6e7e9"></div>
<div class="a" style="left:312px;top:419px;width:12px;height:1px;background:#d3d7dc"></div>
<div class="a" style="left:325px;top:419px;width:286px;height:1px;background:#e6e7e9"></div>
<div class="a" style="left:312px;top:429px;width:12px;height:1px;background:#d3d7dc"></div>
<div class="a" style="left:325px;top:429px;width:286px;height:1px;background:#e6e7e9"></div>
<div class="a" style="left:312px;top:438px;width:12px;height:1px;background:#d3d7dc"></div>
<div class="a" style="left:325px;top:438px;width:286px;height:1px;background:#e6e7e9"></div>
<div class="a" style="left:312px;top:448px;width:12px;height:1px;background:#d3d7dc"></div>
<div class="a" style="left:325px;top:448px;width:286px;height:1px;background:#e6e7e9"></div>
<div class="a" style="left:312px;top:458px;width:12px;height:1px;background:#d3d7dc"></div>
<div class="a" style="left:325px;top:458px;width:286px;height:1px;background:#e6e7e9"></div>
<div class="a" style="left:364px;top:91px;width:1px;height:370px;background:#e6e7e9"></div>
<div class="a" style="left:403px;top:91px;width:1px;height:370px;background:#e6e7e9"></div>
<div class="a" style="left:434px;top:91px;width:1px;height:370px;background:#e6e7e9"></div>
<div class="a" style="left:465px;top:91px;width:1px;height:370px;background:#e6e7e9"></div>
<div class="a" style="left:496px;top:91px;width:1px;height:370px;background:#e6e7e9"></div>
<div class="a" style="left:527px;top:91px;width:1px;height:370px;background:#e6e7e9"></div>
<div class="a" style="left:558px;top:91px;width:1px;height:370px;background:#e6e7e9"></div>
<div class="a" style="left:589px;top:91px;width:1px;height:370px;background:#e6e7e9"></div>
<div class="t" style="left:312px;top:92.89px;width:12.3px;text-align:center;font-size:6.6px;letter-spacing:-0.3px;color:#38414c">1</div>
<div class="t" style="left:312px;top:102.58px;width:12.3px;text-align:center;font-size:6.6px;letter-spacing:-0.3px;color:#38414c">2</div>
<div class="t" style="left:312px;top:112.26px;width:12.3px;text-align:center;font-size:6.6px;letter-spacing:-0.3px;color:#38414c">3</div>
<div class="t" style="left:312px;top:121.95px;width:12.3px;text-align:center;font-size:6.6px;letter-spacing:-0.3px;color:#38414c">4</div>
<div class="t" style="left:312px;top:131.64px;width:12.3px;text-align:center;font-size:6.6px;letter-spacing:-0.3px;color:#38414c">5</div>
<div class="t" style="left:312px;top:141.33px;width:12.3px;text-align:center;font-size:6.6px;letter-spacing:-0.3px;color:#38414c">6</div>
<div class="t" style="left:312px;top:151.01px;width:12.3px;text-align:center;font-size:6.6px;letter-spacing:-0.3px;color:#38414c">7</div>
<div class="t" style="left:312px;top:160.70px;width:12.3px;text-align:center;font-size:6.6px;letter-spacing:-0.3px;color:#38414c">8</div>
<div class="t" style="left:312px;top:170.39px;width:12.3px;text-align:center;font-size:6.6px;letter-spacing:-0.3px;color:#38414c">9</div>
<div class="t" style="left:312px;top:180.08px;width:12.3px;text-align:center;font-size:6.6px;letter-spacing:-0.3px;color:#38414c">10</div>
<div class="t" style="left:312px;top:189.76px;width:12.3px;text-align:center;font-size:6.6px;letter-spacing:-0.3px;color:#38414c">11</div>
<div class="t" style="left:312px;top:199.45px;width:12.3px;text-align:center;font-size:6.6px;letter-spacing:-0.3px;color:#38414c">12</div>
<div class="t" style="left:312px;top:209.14px;width:12.3px;text-align:center;font-size:6.6px;letter-spacing:-0.3px;color:#38414c">13</div>
<div class="t" style="left:312px;top:218.83px;width:12.3px;text-align:center;font-size:6.6px;letter-spacing:-0.3px;color:#38414c">14</div>
<div class="t" style="left:312px;top:228.51px;width:12.3px;text-align:center;font-size:6.6px;letter-spacing:-0.3px;color:#38414c">15</div>
<div class="t" style="left:312px;top:238.20px;width:12.3px;text-align:center;font-size:6.6px;letter-spacing:-0.3px;color:#38414c">16</div>
<div class="t" style="left:312px;top:247.89px;width:12.3px;text-align:center;font-size:6.6px;letter-spacing:-0.3px;color:#38414c">17</div>
<div class="t" style="left:312px;top:257.57px;width:12.3px;text-align:center;font-size:6.6px;letter-spacing:-0.3px;color:#38414c">18</div>
<div class="t" style="left:312px;top:267.26px;width:12.3px;text-align:center;font-size:6.6px;letter-spacing:-0.3px;color:#38414c">19</div>
<div class="t" style="left:312px;top:276.95px;width:12.3px;text-align:center;font-size:6.6px;letter-spacing:-0.3px;color:#38414c">20</div>
<div class="t" style="left:312px;top:286.64px;width:12.3px;text-align:center;font-size:6.6px;letter-spacing:-0.3px;color:#38414c">21</div>
<div class="t" style="left:312px;top:296.32px;width:12.3px;text-align:center;font-size:6.6px;letter-spacing:-0.3px;color:#38414c">22</div>
<div class="t" style="left:312px;top:306.01px;width:12.3px;text-align:center;font-size:6.6px;letter-spacing:-0.3px;color:#38414c">23</div>
<div class="t" style="left:312px;top:315.70px;width:12.3px;text-align:center;font-size:6.6px;letter-spacing:-0.3px;color:#38414c">24</div>
<div class="t" style="left:312px;top:325.39px;width:12.3px;text-align:center;font-size:6.6px;letter-spacing:-0.3px;color:#38414c">25</div>
<div class="t" style="left:312px;top:335.07px;width:12.3px;text-align:center;font-size:6.6px;letter-spacing:-0.3px;color:#38414c">26</div>
<div class="t" style="left:312px;top:344.76px;width:12.3px;text-align:center;font-size:6.6px;letter-spacing:-0.3px;color:#38414c">27</div>
<div class="t" style="left:312px;top:354.45px;width:12.3px;text-align:center;font-size:6.6px;letter-spacing:-0.3px;color:#38414c">28</div>
<div class="t" style="left:312px;top:364.14px;width:12.3px;text-align:center;font-size:6.6px;letter-spacing:-0.3px;color:#38414c">29</div>
<div class="t" style="left:312px;top:373.82px;width:12.3px;text-align:center;font-size:6.6px;letter-spacing:-0.3px;color:#38414c">30</div>
<div class="t" style="left:312px;top:383.51px;width:12.3px;text-align:center;font-size:6.6px;letter-spacing:-0.3px;color:#38414c">31</div>
<div class="t" style="left:312px;top:393.20px;width:12.3px;text-align:center;font-size:6.6px;letter-spacing:-0.3px;color:#38414c">32</div>
<div class="t" style="left:312px;top:402.89px;width:12.3px;text-align:center;font-size:6.6px;letter-spacing:-0.3px;color:#38414c">33</div>
<div class="t" style="left:312px;top:412.57px;width:12.3px;text-align:center;font-size:6.6px;letter-spacing:-0.3px;color:#38414c">34</div>
<div class="t" style="left:312px;top:422.26px;width:12.3px;text-align:center;font-size:6.6px;letter-spacing:-0.3px;color:#38414c">35</div>
<div class="t" style="left:312px;top:431.95px;width:12.3px;text-align:center;font-size:6.6px;letter-spacing:-0.3px;color:#38414c">36</div>
<div class="t" style="left:312px;top:441.64px;width:12.3px;text-align:center;font-size:6.6px;letter-spacing:-0.3px;color:#38414c">37</div>
<div class="t" style="left:312px;top:451.32px;width:12.3px;text-align:center;font-size:6.6px;letter-spacing:-0.3px;color:#38414c">38</div>
<div class="t" style="left:365.6px;top:93.54px;font-size:6.6px;color:#1e1e1e">Продажи</div>
<div class="t" style="left:325.9px;top:103.23px;font-size:6.6px;color:#1e1e1e">Кв. 1</div>
<div class="t" style="left:377.3px;top:103.23px;width:25px;text-align:right;font-size:6.6px;color:#1e1e1e">8,2</div>
<div class="t" style="left:325.9px;top:112.91px;font-size:6.6px;color:#1e1e1e">Кв. 2</div>
<div class="t" style="left:377.3px;top:112.91px;width:25px;text-align:right;font-size:6.6px;color:#1e1e1e">3,2</div>
<div class="t" style="left:325.9px;top:122.60px;font-size:6.6px;color:#1e1e1e">Кв. 3</div>
<div class="t" style="left:377.3px;top:122.60px;width:25px;text-align:right;font-size:6.6px;color:#1e1e1e">1,4</div>
<div class="t" style="left:325.9px;top:132.29px;font-size:6.6px;color:#1e1e1e">Кв. 4</div>
<div class="t" style="left:377.3px;top:132.29px;width:25px;text-align:right;font-size:6.6px;color:#1e1e1e">1,2</div>
<div class="a" style="left:325px;top:150px;width:286px;height:20px;overflow:hidden">
<div class="t" style="left:40.3px;top:11.35px;font-size:6.7px;color:#1e1e1e">Для изменения диапазона данных диаграммы перетащите правый нижний угол</div>
</div>
<div class="a" style="left:403px;top:90px;width:1px;height:49px;background:#5060e8"></div>
<div class="a" style="left:365px;top:138px;width:39px;height:1px;background:#5060e8"></div>
<div class="a" style="left:402px;top:137px;width:2px;height:2px;background:#3040d0"></div>
<div class="a" style="left:324px;top:138px;width:41px;height:11px;border:1px solid #161616;border-left-width:1px"></div>
<div class="a" style="left:325px;top:139px;width:39px;height:9px;border-right:1px solid #161616;border-bottom:1px solid #161616"></div>
<div class="a" style="left:363px;top:147px;width:3px;height:3px;background:#161616;border:0.5px solid #fff"></div>
<div class="a" style="left:611px;top:80.3px;width:7px;height:381px;background:#e9ecef"></div>
<div class="a" style="left:611px;top:80.3px;width:1px;height:381px;background:#d3d7db"></div>
<div class="a" style="left:611.3px;top:80.7px;width:6.6px;height:2.9px;background:#fff;border:0.6px solid #8f959c;border-radius:0.8px"></div>
<svg style="left:612.2px;top:85.8px" width="5" height="4"><path d="M0 3 L2.4 0.3 L4.8 3z" fill="#3d3d3d"/></svg>
<div class="a" style="left:612px;top:91.3px;width:5.6px;height:351.6px;background:linear-gradient(90deg,#fbfbfc,#e6e9ed);border:0.5px solid #c9cdd2;border-radius:1px"></div>
<div class="a" style="left:612.6px;top:265.3px;width:3.6px;height:3.6px;background:#c4c8cd"></div>
<svg style="left:612.2px;top:455.8px" width="5" height="4"><path d="M0 0.3 L2.4 3 L4.8 0.3z" fill="#3d3d3d"/></svg>
<div class="a" style="left:312px;top:461px;width:306px;height:7px;background:linear-gradient(#e9ecef,#dde1e6)"></div>
<div class="a" style="left:312px;top:461px;width:306px;height:1px;background:#c2c7cd"></div>
<div class="a" style="left:312px;top:468px;width:306px;height:1px;background:#aab0b7"></div>
<div class="a" style="left:312px;top:462px;width:28px;height:6px;background:linear-gradient(#f1f3f5,#e3e7eb)"></div>
<div class="a" style="left:340px;top:461px;width:1px;height:7px;background:#c2c7cd"></div>
<svg style="left:313px;top:462px" width="28" height="6"><path d="M1.6 1.3 L1.6 4.7" stroke="#666" stroke-width="0.6"/><path d="M4.4 1.4 L2.4 3 L4.4 4.6z" fill="#555"/><path d="M11 1.4 L9.3 3 L11 4.6z" fill="#444"/><path d="M15.3 1.4 L17 3 L15.3 4.6z" fill="#444"/><path d="M21.6 1.4 L23.6 3 L21.6 4.6z" fill="#555"/><path d="M24.4 1.3 L24.4 4.7" stroke="#666" stroke-width="0.6"/></svg>
<svg style="left:340px;top:461px" width="50" height="8"><path d="M28.2 0.3 L44.8 0.3 L38.7 7.2 L24 7.2z" fill="#e9ecef" stroke="#9aa1a9" stroke-width="0.5"/><path d="M0.5 -0.2 L0.5 7 L24 7 L28.2 0.3 L28.2 -0.2z" fill="#fff"/><path d="M0.5 7 L24 7 L28.2 0.3" fill="none" stroke="#9aa1a9" stroke-width="0.6"/></svg>
<div class="t" style="left:344.7px;top:462.9px;font-size:5.5px;color:#111;font-weight:bold;letter-spacing:0.1px">Лист1</div>
<svg style="left:369.5px;top:461px" width="9" height="7"><rect x="2.3" y="2" width="5.6" height="4.3" fill="#cfe0f3" stroke="#3f6fb5" stroke-width="0.6"/><path d="M3 3.2 L6.8 3.2" stroke="#fff" stroke-width="0.5"/><circle cx="2" cy="1.8" r="1.3" fill="#f6b33a"/></svg>
<div class="a" style="left:491px;top:462px;width:120px;height:6px;background:linear-gradient(#e9ecef,#dde1e6)"></div>
<div class="a" style="left:491.6px;top:461.8px;width:3px;height:6.4px;background:#fff;border:0.6px solid #8f959c;border-radius:0.6px"></div>
<svg style="left:496.5px;top:463.3px" width="4" height="4"><path d="M2.6 0 L0.3 1.7 L2.6 3.4z" fill="#333"/></svg>
<div class="a" style="left:502px;top:461.6px;width:86px;height:6.6px;background:linear-gradient(#f9fafb,#e8ebee);border:0.6px solid #b5bac0;border-radius:1px"></div>
<div class="a" style="left:543px;top:463.5px;width:3.4px;height:3px;background:#c4c8cd"></div>
<svg style="left:603px;top:463.3px" width="4" height="4"><path d="M0.3 0 L2.6 1.7 L0.3 3.4z" fill="#333"/></svg>
<div class="a" style="left:608px;top:461.8px;width:3px;height:6.4px;background:#fff;border:0.6px solid #8f959c;border-radius:0.6px"></div>
<div class="a" style="left:311px;top:469.2px;width:309px;height:10.8px;background:linear-gradient(#e7e9ec,#d8dce0)"></div>
<div class="a" style="left:311px;top:469.2px;width:309px;height:0.6px;background:#b4b8bd"></div>
<div class="t" style="left:315.2px;top:472.1px;font-size:5.6px;color:#4e5358;">Готово</div>
<div class="a" style="left:338px;top:470px;width:0.6px;height:9px;background:#b7bbc0"></div>
<div class="a" style="left:494px;top:470px;width:0.6px;height:9px;background:#b7bbc0"></div>
<div class="a" style="left:496.1px;top:469.9px;width:9.2px;height:8.8px;background:linear-gradient(#fff4d0,#fde7a8);border:0.9px solid #e6b545;border-radius:1px"></div>
<svg style="left:497.8px;top:471.6px" width="6" height="6"><rect x="0.3" y="0.3" width="5.2" height="4.8" fill="#fff"/><path d="M1.6 0.3 L1.6 5.1 M3.2 0.3 L3.2 5.1 M4.8 0.3 L4.8 5.1 M0.3 0.4 L5.5 0.4" stroke="#2a2a2a" stroke-width="0.7"/></svg>
<svg style="left:506.3px;top:470.6px" width="8" height="8"><rect x="0.4" y="0.4" width="7" height="7" fill="#c9cccf" stroke="#8a8e93" stroke-width="0.5"/><rect x="1.8" y="1.8" width="4.2" height="4.2" fill="#f2f3f4" stroke="#555" stroke-width="0.5"/></svg>
<svg style="left:515px;top:470.6px" width="9" height="8"><rect x="0.4" y="0.4" width="7.6" height="7" fill="#c9cccf" stroke="#8a8e93" stroke-width="0.5"/><rect x="1.6" y="1.6" width="2.2" height="4.6" fill="#fff"/><rect x="4.6" y="1.6" width="2.2" height="4.6" fill="#fff"/><path d="M1.6 3.2 L3.8 3.2" stroke="#444" stroke-width="0.6"/></svg>
<div class="t" style="left:528px;top:472.1px;font-size:5.6px;color:#4e5358;">100%</div>
<svg style="left:544px;top:469.8px" width="68" height="10"><path d="M9 4.9 L59 4.9" stroke="#9ea2a6" stroke-width="0.7"/><path d="M34 3.2 L34 6.6" stroke="#9ea2a6" stroke-width="0.6"/><circle cx="5.6" cy="4.9" r="3.6" fill="#fafbfc" stroke="#8e9297" stroke-width="0.7"/><rect x="3.6" y="4.1" width="4" height="1.6" fill="#fff" stroke="#555" stroke-width="0.5"/><path d="M32 1.2 L36 1.2 L36 6 L34 7.9 L32 6z" fill="#f7f8f9" stroke="#7a7e83" stroke-width="0.6"/><circle cx="62.5" cy="4.9" r="3.6" fill="#fafbfc" stroke="#8e9297" stroke-width="0.7"/><circle cx="62.5" cy="4.9" r="1.5" fill="#6a6e73"/></svg>
<svg style="left:612px;top:472.5px" width="6" height="6"><g fill="#c2c6ca"><rect x="4" y="0" width="1" height="1"/><rect x="2" y="2" width="1" height="1"/><rect x="4" y="2" width="1" height="1"/><rect x="0" y="4" width="1" height="1"/><rect x="2" y="4" width="1" height="1"/><rect x="4" y="4" width="1" height="1"/></g></svg>
<div class="a" style="left:618px;top:0px;width:2px;height:480px;background:linear-gradient(90deg,#b3b7bc,#cfd3d7)"></div>
<div class="a" style="left:0px;top:480px;width:620px;height:16px;background:#d4d0c8"></div>
<div class="a" style="left:0px;top:480.2px;width:620px;height:0.8px;background:#ffffff"></div>
<div class="a" style="left:1px;top:482.8px;width:24.8px;height:11.2px;background:#d4d0c8;border:0.8px solid;border-color:#fff #404040 #404040 #fff"></div>
<svg style="left:2.6px;top:484.3px" width="8" height="8"><path d="M0.5 1.2 Q1.9 0.5 3.4 1.1 L3.1 3.5 Q1.7 2.9 0.2 3.6z" fill="#e8502b"/><path d="M3.9 1.1 Q5.4 1.8 7 0.9 L6.7 3.4 Q5.2 4.1 3.6 3.5z" fill="#5cb231"/><path d="M0.1 4.1 Q1.6 3.5 3 4 L2.7 6.6 Q1.3 6 -0.2 6.7z" fill="#2d6fd6"/><path d="M3.5 4 Q5.1 4.7 6.6 3.9 L6.3 6.4 Q4.8 7.2 3.2 6.6z" fill="#f2c214"/></svg>
<div class="t" style="left:11.0px;top:485.7px;font-size:5.6px;color:#000;font-weight:bold;letter-spacing:-0.25px">Пуск</div>
<div class="a" style="left:28px;top:482.8px;width:77.5px;height:11.2px;background:#d4d0c8;border:0.8px solid;border-color:#fff #404040 #404040 #fff"></div>
<svg style="left:30px;top:484px" width="8" height="8"><circle cx="2" cy="2" r="1.7" fill="#e0403a"/><circle cx="6" cy="2" r="1.7" fill="#3c8de0"/><circle cx="2" cy="6" r="1.7" fill="#3cb040"/><circle cx="6" cy="6" r="1.7" fill="#f0b020"/></svg>
<div class="t" style="left:40px;top:486.2px;font-size:5.4px;color:#111;letter-spacing:-0.06px">Загрузки - Нюрон</div>
<div class="a" style="left:108px;top:482.8px;width:76px;height:11.2px;background:#d4d0c8;border:0.8px solid;border-color:#fff #404040 #404040 #fff"></div>
<svg style="left:110px;top:484px" width="8" height="9"><rect x="0.5" y="0.5" width="7" height="7.6" fill="#f4f7fc" stroke="#3d6ec9" stroke-width="0.7"/><path d="M1.3 2 L2.4 6.5 L3.9 3.5 L5.4 6.5 L6.5 2" fill="none" stroke="#1f55c0" stroke-width="1"/></svg>
<div class="t" style="left:119.5px;top:486.2px;font-size:5.4px;color:#111;letter-spacing:-0.06px">Лекция 6 (44) [Режим о...</div>
<div class="a" style="left:186.5px;top:482.8px;width:76.5px;height:11.2px;background:#d4d0c8;border:0.8px solid;border-color:#fff #404040 #404040 #fff"></div>
<svg style="left:188.5px;top:484px" width="8" height="9"><rect x="0.5" y="0.5" width="7" height="7.6" fill="#fbe3d6" stroke="#d2542a" stroke-width="0.8"/><path d="M2.6 6.8 L2.6 1.8 L4.6 1.8 Q6 1.8 6 3.2 Q6 4.6 4.6 4.6 L2.6 4.6" fill="none" stroke="#d2542a" stroke-width="1.1"/></svg>
<div class="t" style="left:198px;top:486.2px;font-size:5.4px;color:#111;letter-spacing:-0.06px">Презентация1 - Micriso...</div>
<div class="a" style="left:265px;top:482.8px;width:75.5px;height:11.2px;background:#d4d0c8;border:0.8px solid;border-color:#fff #404040 #404040 #fff"></div>
<svg style="left:267px;top:484px" width="9" height="9"><rect x="1.5" y="1" width="6.5" height="7.3" fill="#eef3fa" stroke="#6a8fc8" stroke-width="0.6"/><rect x="0.3" y="0.3" width="4.6" height="4.6" fill="#2e9a36"/><path d="M1.2 1.2 L4 4 M4 1.2 L1.2 4" stroke="#fff" stroke-width="0.7"/></svg>
<div class="t" style="left:276.5px;top:486.2px;font-size:5.4px;color:#111;letter-spacing:-0.06px">Диаграмма в Microsoft P...</div>
<div class="a" style="left:344px;top:482.8px;width:77px;height:11.2px;background:#e6e3dc;border:0.8px solid;border-color:#404040 #fff #fff #404040"></div>
<svg style="left:346px;top:484px" width="9" height="9"><rect x="1.5" y="1" width="6.5" height="7.3" fill="#eef3fa" stroke="#6a8fc8" stroke-width="0.6"/><circle cx="3" cy="3.6" r="2.6" fill="#3aa040"/><path d="M2 2.3 L4 4.9 M4 2.3 L2 4.9" stroke="#fff" stroke-width="0.6"/></svg>
<div class="t" style="left:356px;top:486.2px;font-size:5.4px;color:#000;font-weight:bold;letter-spacing:-0.12px">Диаграмма 2 в Micro...</div>
<svg style="left:546px;top:484.6px" width="8" height="8"><rect x="0.4" y="0.4" width="6.6" height="7" fill="#1a2f80"/><text x="3.7" y="6" font-size="5" font-weight="bold" fill="#fff" text-anchor="middle" font-family="Liberation Sans" letter-spacing="-0.4">RL</text></svg>
<div class="a" style="left:555px;top:483.7px;width:65px;height:9.8px;border:0.8px solid;border-color:#8a8a8a #fff #fff #8a8a8a"></div>
<svg style="left:556px;top:484.5px" width="8" height="8"><rect x="0.4" y="0.6" width="4.2" height="3.6" fill="#9cc0ec" stroke="#2f62b8" stroke-width="0.6"/><rect x="2.6" y="3.2" width="4.2" height="3.6" fill="#9cc0ec" stroke="#2f62b8" stroke-width="0.6"/><path d="M1 7.4 L4 7.4" stroke="#2f62b8" stroke-width="0.6"/></svg>
<svg style="left:565px;top:484.6px" width="7" height="8"><path d="M0.4 7 L1.8 0.8 L3 0.8 L2.5 3.4 L5.6 0.8 L6.8 0.8 L3.2 4 L5.8 7 L4.3 7 L2.2 4.7 L1.8 7z" fill="#e21b1b"/><rect x="4.2" y="5.6" width="2.6" height="2.2" fill="#1a1a1a"/></svg>
<svg style="left:573px;top:484.4px" width="8" height="8"><path d="M3.9 0.3 L7.7 3.8 L0.1 3.8z" fill="#e01010"/><circle cx="3.9" cy="5.3" r="2.3" fill="#1a1a1a"/><path d="M0.2 4.6 L7.6 4.6" stroke="#e01010" stroke-width="0.6"/></svg>
<svg style="left:582px;top:484.6px" width="8" height="8"><circle cx="3.4" cy="3.8" r="3" fill="#b8b8b8" stroke="#666" stroke-width="0.6"/><circle cx="3.4" cy="3.8" r="1.3" fill="#444"/><path d="M4 6.2 L6.6 7.5" stroke="#7a7ad8" stroke-width="0.9"/></svg>
<svg style="left:590px;top:484.3px" width="8" height="9"><rect x="0.3" y="0.3" width="3.6" height="3.6" fill="#2fb52f"/><path d="M1 6 L4 3.8 L7 6 L4 8.2z" fill="#8a8a8a" stroke="#555" stroke-width="0.5"/></svg>
<div class="t" style="left:601.8px;top:486.4px;font-size:5.4px;color:#111;letter-spacing:-0.1px">14:53</div>
</body></html>
